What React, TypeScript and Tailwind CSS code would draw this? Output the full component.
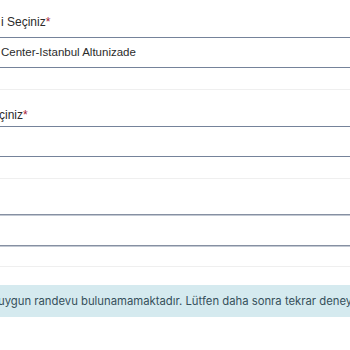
export default function App() {
  return (
    <div className="w-[350px] h-[350px] overflow-hidden bg-white font-['Liberation_Sans',Arial,sans-serif] text-[#2b2b2b]">
      <div className="flex flex-col">
        {/* first select */}
        <div className="h-[37px] flex items-end pb-[8px] text-[12px] leading-[14px] whitespace-nowrap">
          <span className="pl-[1px]">i Seçiniz</span>
          <span className="text-[#a51d36]">*</span>
        </div>
        <div className="h-[31px] border-y border-[#75839a] flex items-center text-[11.5px] whitespace-nowrap pl-[1px]">
          Center-Istanbul Altunizade
        </div>
        <div className="h-[21px]" />
        <div className="h-px bg-[#efefef]" />

        {/* second select */}
        <div className="h-[36px] flex items-end pb-[4px] text-[12px] leading-[14px] whitespace-nowrap">
          <span className="-ml-[1px]">çiniz</span>
          <span className="text-[#a51d36]">*</span>
        </div>
        <div className="h-[31px] border-y border-[#75839a]" />
        <div className="h-[21px]" />
        <div className="h-px bg-[#efefef]" />

        {/* third field */}
        <div className="h-[35px]" />
        <div className="h-[32px] border-y border-[#8690a2] shadow-[0_1px_0_#c3c9d3,inset_0_1px_0_#c3c9d3]" />
        <div className="h-[20px]" />
        <div className="h-px bg-[#efefef]" />

        {/* alert */}
        <div className="mt-[18px] h-[32px] bg-[#d5eaef] flex items-center whitespace-nowrap text-[11.3px] text-[#36505b] font-['Inter',sans-serif]">
          <span className="-ml-[2px]">uygun randevu bulunamamaktadır. Lütfen daha sonra tekrar deneyin.</span>
        </div>
      </div>
    </div>
  )
}
